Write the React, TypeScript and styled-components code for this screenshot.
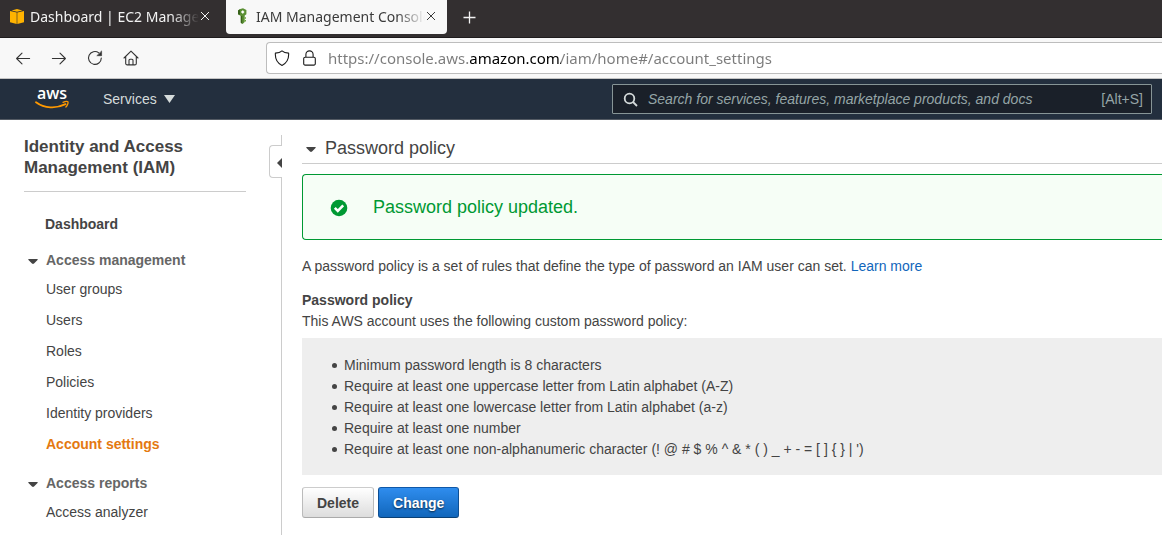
import React, { useState } from "react";
import styled, { createGlobalStyle, css } from "styled-components";

const GlobalStyle = createGlobalStyle`
  *, *::before, *::after { box-sizing: border-box; }
  body {
    margin: 0;
    background: #fff;
    color: #444;
    font: 14px/21px "Liberation Sans", Arial, sans-serif;
  }
  button, input { font: inherit; color: inherit; margin: 0; }
  button { padding: 0; border: 0; background: none; cursor: pointer; }
  h1, h2, h3, p, ul { margin: 0; padding: 0; font-size: inherit; }
`;

const uiFont = `"Noto Sans", "Open Sans", sans-serif`;

const Page = styled.div`
  display: flex;
  flex-direction: column;
  min-height: 100vh;
  overflow-x: hidden;
`;

/* Browser chrome */
const TabStrip = styled.div`
  display: flex;
  align-items: flex-start;
  gap: 5px;
  height: 38px;
  background: #332f30;
  border-bottom: 1px solid #1f1c1d;
  font-family: ${uiFont};
`;

const Tab = styled.div<{ $active?: boolean }>`
  display: flex;
  align-items: center;
  flex: 0 0 221px;
  min-width: 0;
  height: 34px;
  padding: 0 10px 2px;
  border-radius: 0 0 4px 4px;
  color: #f2f2f2;
  ${(p) => p.$active && css`background: #f8f8f8; color: #3b3b3b;`}
`;

const TabTitle = styled.span`
  flex: 1;
  min-width: 0;
  margin-left: 6px;
  font-size: 14px;
  white-space: nowrap;
  overflow: hidden;
  mask-image: linear-gradient(to right, #000 calc(100% - 28px), transparent);
`;

const IconButton = styled.button<{ $w: number; $h: number }>`
  display: flex;
  align-items: center;
  justify-content: center;
  flex: none;
  width: ${(p) => p.$w}px;
  height: ${(p) => p.$h}px;
`;

const NewTab = styled(IconButton)`
  color: #f2f2f2;
`;

const NavBar = styled.div`
  display: flex;
  align-items: center;
  height: 41px;
  padding-left: 5px;
  background: #f8f8f8;
  border-bottom: 1px solid #c4c4c4;
  color: #333;
`;

const AddressBox = styled.label`
  display: flex;
  align-items: center;
  flex: 1;
  gap: 11px;
  height: 32px;
  margin-left: 117px;
  padding-left: 7px;
  background: #fff;
  border: 1px solid #bdbdbd;
  border-right: 0;
  border-radius: 4px 0 0 4px;
  color: #1c1c1c;
`;

const AddressInput = styled.input`
  flex: 1;
  min-width: 0;
  height: 28px;
  padding: 0;
  border: 0;
  outline: 0;
  font-family: ${uiFont};
  font-size: 15px;
  color: transparent;
  background: linear-gradient(to right, #7b7b7b 142px, #000 142px 233px, #7b7b7b 233px);
  background-clip: text;
`;

/* Console header */
const ConsoleHeader = styled.header`
  display: flex;
  align-items: center;
  height: 41px;
  padding: 0 10px 0 35px;
  background: #232f3e;
  border-bottom: 1px solid #545b64;
  color: #d5dbdb;
`;

const LogoLink = styled.a`
  display: flex;
`;

const ServicesButton = styled.button`
  display: flex;
  align-items: center;
  gap: 7px;
  margin-left: 33px;
`;

const SearchBox = styled.label`
  display: flex;
  align-items: center;
  flex: 0 1 540px;
  height: 30px;
  margin-left: auto;
  padding: 0 8px 0 10px;
  background: #1a2029;
  border: 1px solid #879596;
  border-radius: 1px;
  color: #95a5a6;
`;

const SearchInput = styled.input`
  flex: 1;
  min-width: 0;
  margin-left: 10px;
  padding: 0;
  border: 0;
  outline: 0;
  background: none;
  &::placeholder { color: #95a5a6; font-style: italic; opacity: 1; }
`;

/* Console body */
const Body = styled.div`
  display: flex;
  flex: 1;
`;

const Sidebar = styled.aside`
  position: relative;
  flex: 0 0 282px;
  margin-top: 15px;
  padding: 1px 35px 12px 24px;
  border-right: 1px solid #ccc;
`;

const CollapseHandle = styled.button`
  position: absolute;
  top: 10px;
  right: -1px;
  display: flex;
  align-items: center;
  justify-content: flex-end;
  width: 13px;
  height: 33px;
  padding-top: 2px;
  background: #fff;
  border: 1px solid #ccc;
  border-right: 0;
  border-radius: 4px 0 0 4px;
  color: #444;
`;

const SidebarTitle = styled.h1`
  padding-bottom: 13px;
  border-bottom: 1px solid #ccc;
  font-size: 17px;
  font-weight: bold;
`;

const SideNav = styled.nav`
  padding-top: 22px;
`;

const NavLink = styled.a<{ $bold?: boolean; $active?: boolean }>`
  color: ${(p) => (p.$active ? "#e47911" : "#444")};
  font-weight: ${(p) => (p.$bold || p.$active ? "bold" : "normal")};
  text-decoration: none;
`;

const TopItem = styled.div`
  padding-left: 21px;
`;

const NavSection = styled.section`
  padding-top: 15px;
  & + & { padding-top: 18px; }
`;

const SectionToggle = styled.button`
  display: flex;
  align-items: center;
  gap: 8px;
  padding-left: 4px;
  color: #666;
  font-weight: bold;
`;

const CaretShape = styled.svg`
  margin-top: 2px;
  color: #444;
`;

const NavList = styled.ul`
  display: flex;
  flex-direction: column;
  gap: 10px;
  padding: 8px 0 0 22px;
  list-style: none;
`;

const Main = styled.main`
  flex: 1;
  min-width: 0;
  padding: 18px 0 16px 20px;
`;

const PolicyHeading = styled.h2`
  padding-bottom: 4px;
  border-bottom: 1px solid #ccc;
  font-weight: normal;
`;

const HeadingToggle = styled.button`
  display: flex;
  align-items: center;
  gap: 9px;
  padding-left: 4px;
  font-size: 18px;
`;

const Alert = styled.div`
  display: flex;
  align-items: center;
  gap: 25px;
  height: 66px;
  margin: 10px 0 16px;
  padding: 1px 0 0 27px;
  background: #f6fef6;
  border: 1px solid #009933;
  border-right: 0;
  border-radius: 4px 0 0 4px;
  color: #009933;
  font-size: 18px;
`;

const Subheading = styled.h3`
  margin-top: 13px;
  font-weight: bold;
`;

const TextLink = styled.a`
  color: #1166bb;
  text-decoration: none;
`;

const Rules = styled.ul`
  margin: 6px 0 12px;
  padding: 17px 16px 15px 30px;
  background: #eee;
  list-style: none;
`;

const Rule = styled.li`
  display: flex;
  align-items: center;
  gap: 7px;
  &::before {
    content: "";
    flex: none;
    width: 5px;
    height: 5px;
    border-radius: 50%;
    background: #444;
  }
`;

const Actions = styled.div`
  display: flex;
  gap: 4px;
`;

const ActionButton = styled.button<{ $primary?: boolean }>`
  height: 31px;
  padding: 1px 14px 0;
  border: 1px solid;
  border-radius: 3px;
  font-weight: bold;
  ${(p) =>
    p.$primary
      ? css`
          color: #fff;
          border-color: #0f58a8 #0e4f94 #0a4075;
          background: linear-gradient(#2f8dee, #1166bb);
          text-shadow: 0 1px 2px rgba(0, 0, 0, 0.7);
        `
      : css`
          color: #444;
          border-color: #ccc #bbb #aaa;
          background: linear-gradient(#fff, #ddd);
        `}
`;

const CubeIcon = () => (
  <svg width="14" height="15" viewBox="0 0 14 15" aria-hidden="true">
    <path d="M7 0 12.400 1.400 7 2.800 1.600 1.400Z" fill="#ffb300" />
    <path d="M0 2 6.700 3.600V15L0 13.200Z" fill="#ffb300" />
    <path d="M14 2 7.300 3.600V15L14 13.200Z" fill="#ffb300" />
  </svg>
);

const KeyIcon = () => (
  <svg width="14" height="16" viewBox="0 0 14 16" aria-hidden="true">
    <path d="M3.500 1.200 7 .2 10.400 2V6.200L8.700 7.600V14L6.600 16 4.800 14.800V8L2 6.200V2.400Z" fill="#5a8f33" />
    <path d="M2 2.400 4 1.500V6.800L2 6.200ZM4.800 8H6.200V15.700L4.800 14.800Z" fill="#37611a" />
    <path d="M8.700 9.200H10V10.700H8.700ZM8.700 12H10V13.500H8.700Z" fill="#6aa338" />
    <path d="M6.700 2.500V5.500M5.200 4H8.200" stroke="#fff" strokeWidth="1.400" />
  </svg>
);

const CloseIcon = () => (
  <svg width="10" height="10" viewBox="0 0 10 10" aria-hidden="true">
    <path d="M1 1 9 9M9 1 1 9" stroke="currentColor" strokeWidth="1" />
  </svg>
);

const Caret = () => (
  <CaretShape width="10" height="5" viewBox="0 0 10 5" aria-hidden="true">
    <path d="M.6 0H9.400Q10 .5 9.500 1L6 4.600Q5 5.400 4 4.600L.5 1Q0 .5 .6 0Z" fill="currentColor" />
  </CaretShape>
);

const StrokeIcon = ({ children }: { children: React.ReactNode }) => (
  <svg
    width="16"
    height="16"
    viewBox="0 0 16 16"
    fill="none"
    stroke="currentColor"
    strokeWidth="1.100"
    strokeLinecap="round"
    strokeLinejoin="round"
    aria-hidden="true"
  >
    {children}
  </svg>
);

const AwsLogo = () => (
  <svg width="35" height="36" viewBox="0 -6 35 36" role="img" aria-label="AWS">
    <text x="2" y="12" fontFamily="Open Sans, sans-serif" fontWeight="600" fontSize="16" fill="#fff">
      aws
    </text>
    <path d="M1 15.200C9.500 21.500 21 22 30.500 17.200" fill="none" stroke="#f90" strokeWidth="1.900" strokeLinecap="round" />
    <path d="M28 15.300C30 14.400 32.500 14.200 33 14.900 33.400 15.900 32.400 18.600 30.900 20" fill="none" stroke="#f90" strokeWidth="1.300" strokeLinecap="round" />
  </svg>
);

const accessLinks = ["User groups", "Users", "Roles", "Policies", "Identity providers", "Account settings"];
const reportLinks = ["Access analyzer"];
const rules = [
  "Minimum password length is 8 characters",
  "Require at least one uppercase letter from Latin alphabet (A-Z)",
  "Require at least one lowercase letter from Latin alphabet (a-z)",
  "Require at least one number",
  "Require at least one non-alphanumeric character (! @ # $ % ^ & * ( ) _ + - = [ ] { } | ')",
];

function Section({ title, links }: { title: string; links: string[] }) {
  const [open, setOpen] = useState(true);
  return (
    <NavSection>
      <SectionToggle aria-expanded={open} onClick={() => setOpen(!open)}>
        <Caret />
        {title}
      </SectionToggle>
      {open && (
        <NavList>
          {links.map((name) => (
            <li key={name}>
              <NavLink href="#" $active={name === "Account settings"}>
                {name}
              </NavLink>
            </li>
          ))}
        </NavList>
      )}
    </NavSection>
  );
}

export default function App() {
  return (
    <Page>
      <GlobalStyle />
      <TabStrip>
        <Tab>
          <CubeIcon />
          <TabTitle>Dashboard | EC2 Management</TabTitle>
          <IconButton $w={12} $h={20} aria-label="Close tab">
            <CloseIcon />
          </IconButton>
        </Tab>
        <Tab $active>
          <KeyIcon />
          <TabTitle>IAM Management Console</TabTitle>
          <IconButton $w={12} $h={20} aria-label="Close tab">
            <CloseIcon />
          </IconButton>
        </Tab>
        <NewTab $w={34} $h={34} aria-label="New tab">
          <svg width="13" height="13" viewBox="0 0 13 13" aria-hidden="true">
            <path d="M6.500 .5V12.500M.5 6.500H12.500" stroke="currentColor" strokeWidth="1.300" />
          </svg>
        </NewTab>
      </TabStrip>

      <NavBar>
        <IconButton $w={36} $h={32} aria-label="Back">
          <StrokeIcon>
            <path d="M14.600 8.500H1.600M7 3.200 1.600 8.500 7 13.800" />
          </StrokeIcon>
        </IconButton>
        <IconButton $w={36} $h={32} aria-label="Forward">
          <StrokeIcon>
            <path d="M1.400 8.500H14.400M9 3.200 14.400 8.500 9 13.800" />
          </StrokeIcon>
        </IconButton>
        <IconButton $w={36} $h={32} aria-label="Reload">
          <StrokeIcon>
            <path d="M14.300 8A6.400 6.400 0 1 1 11.800 2.900" />
            <path d="M14.600 1.300V5.700H10.200Z" fill="currentColor" strokeWidth=".6" />
          </StrokeIcon>
        </IconButton>
        <IconButton $w={36} $h={32} aria-label="Home">
          <StrokeIcon>
            <path d="M1 8 8 1.200 15 8M2.700 6.700V13.400A1.500 1.500 0 0 0 4.200 14.900H11.800A1.500 1.500 0 0 0 13.300 13.400V6.700M6 14.700V10.300A1 1 0 0 1 7 9.300H9A1 1 0 0 1 10 10.300V14.700" />
          </StrokeIcon>
        </IconButton>
        <AddressBox>
          <StrokeIcon>
            <path d="M8 .8C9.600 2.200 11.800 2.900 14.600 3.100 15 8.500 13 13 8 15.400 3 13 1 8.500 1.400 3.100 4.200 2.900 6.400 2.200 8 .8Z" />
          </StrokeIcon>
          <StrokeIcon>
            <path d="M4.100 7.200H12.900A1.400 1.400 0 0 1 14.300 8.600V13.700A1.400 1.400 0 0 1 12.900 15.100H4.100A1.400 1.400 0 0 1 2.700 13.700V8.600A1.400 1.400 0 0 1 4.100 7.200ZM4.900 7V4.500A3.600 3.600 0 0 1 12.100 4.500V7" />
          </StrokeIcon>
          <AddressInput aria-label="Address" defaultValue="https://console.aws.amazon.com/iam/home#/account_settings" />
        </AddressBox>
      </NavBar>

      <ConsoleHeader>
        <LogoLink href="#" aria-label="AWS home">
          <AwsLogo />
        </LogoLink>
        <ServicesButton>
          Services
          <svg width="11" height="8" viewBox="0 0 11 8" aria-hidden="true">
            <path d="M0 0H11L5.500 8Z" fill="currentColor" />
          </svg>
        </ServicesButton>
        <SearchBox>
          <svg width="15" height="15" viewBox="0 0 15 15" fill="none" stroke="#d5dbdb" strokeWidth="1.800" aria-hidden="true">
            <circle cx="6.500" cy="6.500" r="4.800" />
            <path d="M10 10 14 14" />
          </svg>
          <SearchInput
            type="text"
            aria-label="Search"
            placeholder="Search for services, features, marketplace products, and docs"
          />
          <span>[Alt+S]</span>
        </SearchBox>
      </ConsoleHeader>

      <Body>
        <Sidebar>
          <CollapseHandle aria-label="Collapse navigation">
            <svg width="5" height="10" viewBox="0 0 5 10" aria-hidden="true">
              <path d="M5 0V10L0 5Z" fill="currentColor" />
            </svg>
          </CollapseHandle>
          <SidebarTitle>Identity and Access Management (IAM)</SidebarTitle>
          <SideNav>
            <TopItem>
              <NavLink href="#" $bold>
                Dashboard
              </NavLink>
            </TopItem>
            <Section title="Access management" links={accessLinks} />
            <Section title="Access reports" links={reportLinks} />
          </SideNav>
        </Sidebar>

        <Main>
          <PolicyHeading>
            <HeadingToggle aria-expanded="true">
              <Caret />
              Password policy
            </HeadingToggle>
          </PolicyHeading>
          <Alert role="status">
            <svg width="18" height="18" viewBox="0 0 18 18" aria-hidden="true">
              <circle cx="9" cy="9" r="8.300" fill="#009933" />
              <path d="M4.800 8.800 7.800 11.800 13.200 6.400" fill="none" stroke="#fff" strokeWidth="2.600" />
            </svg>
            Password policy updated.
          </Alert>
          <p>
            A password policy is a set of rules that define the type of password an IAM user can set.{" "}
            <TextLink href="#">Learn more</TextLink>
          </p>
          <Subheading>Password policy</Subheading>
          <p>This AWS account uses the following custom password policy:</p>
          <Rules>
            {rules.map((rule) => (
              <Rule key={rule}>{rule}</Rule>
            ))}
          </Rules>
          <Actions>
            <ActionButton>Delete</ActionButton>
            <ActionButton $primary>Change</ActionButton>
          </Actions>
        </Main>
      </Body>
    </Page>
  );
}
